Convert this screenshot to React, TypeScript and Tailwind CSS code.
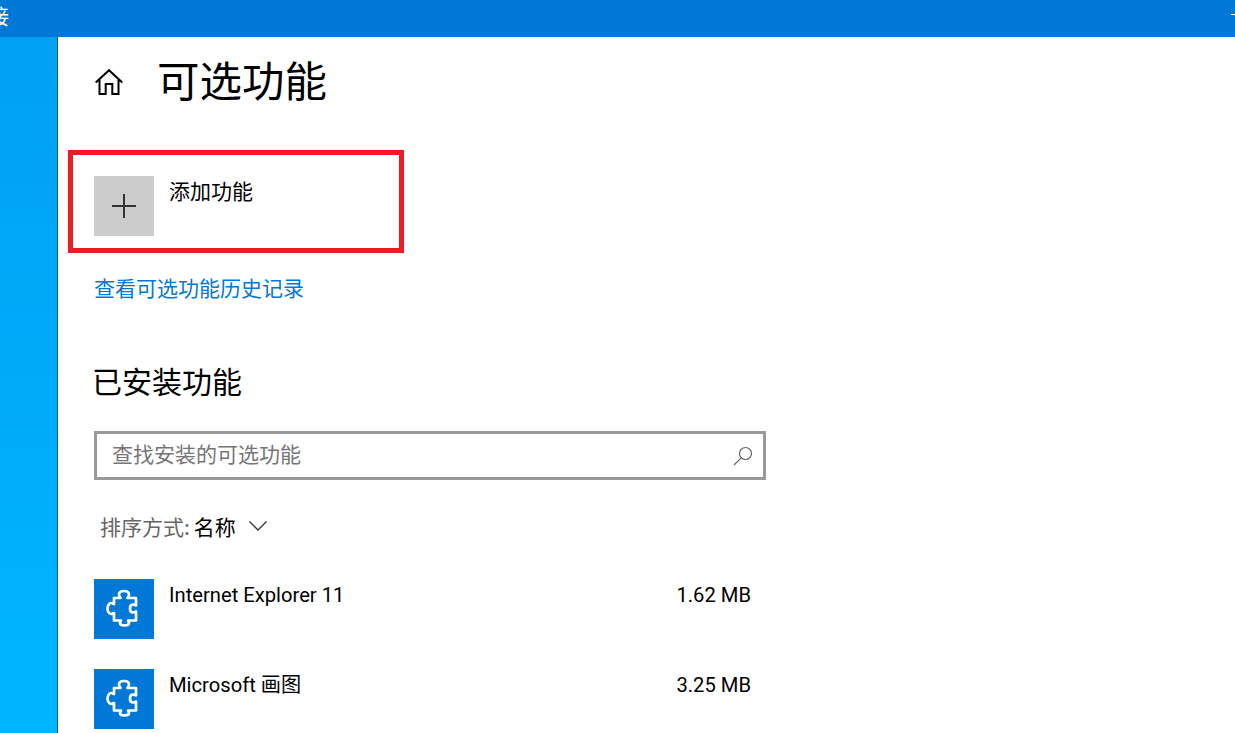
const rows = [
  { name: 'Internet Explorer 11', size: '1.62 MB' },
  { name: 'Microsoft 画图', size: '3.25 MB' },
];

function PuzzleIcon() {
  return (
    <svg viewBox="0 0 60 60" className="h-[60px] w-[60px]" fill="none" stroke="white" strokeWidth="2.7" strokeLinejoin="round">
      <path d="M20 19H26.5C25.3 17.8 25 16.8 25 15.5 25 13.2 27.2 12 30 12S35 13.2 35 15.5C35 16.8 34.7 17.8 33.5 19H42V26.5C41 26 40 25.5 39 25.5 37 25.5 36 27.5 36 29.5S37 33.5 39 33.5C40 33.5 41 33 42 32.5V41.5H34C34.5 42.3 35 43 35 44 35 45.5 33 46.5 30.5 46.5S26 45.5 26 44C26 43 26.5 42.3 27 41.5H20V34C19 34.6 18 35 17 35 15 35 13.5 32 13.5 29.5S15 24 17 24C18 24 19 24.4 20 25Z" />
    </svg>
  );
}

export default function App() {
  return (
    <div className="flex h-[733px] w-[1235px] flex-col overflow-hidden bg-white font-['Noto_Sans_CJK_SC','Noto_Sans',sans-serif] text-black">
      {/* Title bar */}
      <div className="flex h-[37px] shrink-0 items-start justify-between overflow-hidden bg-[#0078d7] text-white">
        <span className="-ml-[12px] mt-[1px] text-[21px] leading-[28px]">接</span>
        <div className="mt-[14px] h-[1px] w-[4px] bg-white" />
      </div>

      <div className="flex min-h-0 flex-1">
        {/* Desktop strip */}
        <div className="w-[58px] shrink-0 border-r border-[#0e5f8f] bg-gradient-to-b from-[#00a0f4] to-[#00b6ff]" />

        <div className="min-w-0 flex-1 pl-[36px]">
          <div className="flex h-[90px] items-center">
            <svg viewBox="0 0 28 26" className="ml-[1px] h-[26px] w-[28px]" fill="none" stroke="black" strokeWidth="2" strokeLinejoin="miter">
              <path d="M.7 13.5 14 1.2l13.3 12.3M4.5 10.5V25h6.2v-10h6.6v10h6.2V10.5" />
            </svg>
            <h1 className="-mt-[6px] ml-[34px] text-[42.5px] leading-[56px]">可选功能</h1>
          </div>

          {/* Add feature */}
          <div className="-ml-[26px] mt-[23px] flex h-[103px] w-[336px] items-start gap-[15px] border-[5px] border-[#ed1c24] pl-[21px] pt-[21px]">
            <div className="flex h-[60px] w-[60px] items-center justify-center bg-[#cccccc]">
              <svg viewBox="0 0 24 24" className="h-[24px] w-[24px]" stroke="#333333" strokeWidth="2">
                <path d="M0 12h24M12 0v24" />
              </svg>
            </div>
            <span className="-mt-[1px] text-[21px] leading-[30px]">添加功能</span>
          </div>

          <a className="mt-[19px] block text-[21px] leading-[30px] text-[#0078d7]">查看可选功能历史记录</a>

          <h2 className="-ml-[2px] mt-[57px] text-[30px] leading-[42px]">已安装功能</h2>

          {/* Search */}
          <div className="mt-[30px] flex h-[49px] w-[672px] items-center justify-between border-[3px] border-[#999999] pl-[15px] pr-[10px]">
            <span className="-mt-[6px] text-[21px] leading-[30px] text-[#767676]">查找安装的可选功能</span>
            <svg viewBox="0 0 20 20" className="h-[20px] w-[20px]" fill="none" stroke="#666666" strokeWidth="1.2">
              <circle cx="12.5" cy="7.5" r="6" />
              <path d="M8.2 11.8 1 19" />
            </svg>
          </div>

          {/* Sort */}
          <div className="mt-[31px] flex h-[30px] items-center pl-[6px] text-[21px] leading-[30px]">
            <span className="text-[#666666]">排序方式:</span>
            <span className="ml-[4px]">名称</span>
            <svg viewBox="0 0 18 10" className="ml-[13px] h-[10px] w-[18px]" fill="none" stroke="#333333" strokeWidth="1.3">
              <path d="M.5.5 9 9l8.5-8.5" />
            </svg>
          </div>

          {/* Installed list */}
          <div className="mt-[38px] flex w-[657px] flex-col gap-[30px]">
            {rows.map((row) => (
              <div key={row.name} className="flex items-start">
                <div className="h-[60px] w-[60px] shrink-0 bg-[#0078d7]">
                  <PuzzleIcon />
                </div>
                <div className="ml-[15px] flex flex-1 justify-between pt-[1px] font-['Roboto','Noto_Sans_CJK_SC',sans-serif] text-[20.2px] leading-[30px]">
                  <span>{row.name}</span>
                  <span>{row.size}</span>
                </div>
              </div>
            ))}
          </div>
        </div>
      </div>
    </div>
  );
}
